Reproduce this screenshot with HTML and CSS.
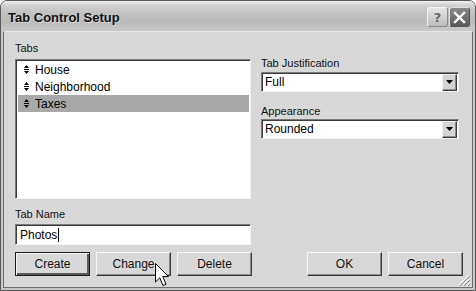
FILE: index.html
```html
<!DOCTYPE html>
<html>
<head>
  <title>Tab Control Setup</title>
  <link rel="stylesheet" href="styles.css">
</head>
<body>
  <div class="window">
    <div class="titlebar">
      <span class="title">Tab Control Setup</span>
      <div class="title-buttons">
        <div class="tb-btn help">?</div>
        <div class="tb-btn close">
          <svg width="13" height="13" viewBox="0 0 13 13"><path d="M2 2 L11 11 M11 2 L2 11" stroke="#fff" stroke-width="2.4" stroke-linecap="square"/></svg>
        </div>
      </div>
    </div>
    <div class="frame">
      <div class="content">
        <div class="main">
          <div class="col-left">
            <label class="field-label">Tabs</label>
            <div class="listbox">
              <div class="list-item">
                <svg class="move-icon" width="5" height="9" viewBox="0 0 5 9"><path d="M2.5 0 L5 3 L0 3 Z M0 4 H5 V5 H0 Z M0 6 H5 L2.5 9 Z" fill="#000"/></svg>
                <span>House</span>
              </div>
              <div class="list-item">
                <svg class="move-icon" width="5" height="9" viewBox="0 0 5 9"><path d="M2.5 0 L5 3 L0 3 Z M0 4 H5 V5 H0 Z M0 6 H5 L2.5 9 Z" fill="#000"/></svg>
                <span>Neighborhood</span>
              </div>
              <div class="list-item selected">
                <svg class="move-icon" width="5" height="9" viewBox="0 0 5 9"><path d="M2.5 0 L5 3 L0 3 Z M0 4 H5 V5 H0 Z M0 6 H5 L2.5 9 Z" fill="#000"/></svg>
                <span>Taxes</span>
              </div>
            </div>
            <label class="field-label name-label">Tab Name</label>
            <div class="textbox">Photos<span class="caret"></span></div>
          </div>
          <div class="col-right">
            <label class="field-label">Tab Justification</label>
            <div class="combo">
              <span class="combo-text">Full</span>
              <div class="combo-arrow"><svg width="7" height="4" viewBox="0 0 7 4"><path d="M0 0 H7 L3.5 4 Z" fill="#000"/></svg></div>
            </div>
            <label class="field-label appearance-label">Appearance</label>
            <div class="combo">
              <span class="combo-text">Rounded</span>
              <div class="combo-arrow"><svg width="7" height="4" viewBox="0 0 7 4"><path d="M0 0 H7 L3.5 4 Z" fill="#000"/></svg></div>
            </div>
          </div>
        </div>
        <div class="button-row">
          <div class="btn-group left-group">
            <button class="btn default">Create</button>
            <button class="btn">Change</button>
            <button class="btn">Delete</button>
          </div>
          <div class="btn-group right-group">
            <button class="btn">OK</button>
            <button class="btn">Cancel</button>
          </div>
        </div>
      </div>
    </div>
    <svg class="grip" width="12" height="12" viewBox="0 0 12 12">
      <path d="M11 1 L1 11 M11 5 L5 11 M11 9 L9 11" stroke="#fff" stroke-width="1"/>
      <path d="M12 2 L2 12 M12 6 L6 12 M12 10 L10 12" stroke="#8a8a8a" stroke-width="1"/>
    </svg>
    <svg class="cursor" width="14" height="24" viewBox="0 0 14 24">
      <path d="M0.5 0.5 L0.5 19 L4.8 14.8 L8 22.5 L11 21.2 L7.8 13.6 L13.5 13.6 Z" fill="#fff" stroke="#000" stroke-width="1" stroke-linejoin="miter"/>
    </svg>
  </div>
</body>
</html>
```

FILE: styles.css
```css
* {
  box-sizing: border-box;
  margin: 0;
  padding: 0;
}
body {
  width: 476px;
  height: 291px;
  background: #fff;
  font-family: "Liberation Sans", Arial, sans-serif;
  font-size: 11px;
  color: #000;
}
.window {
  position: relative;
  width: 476px;
  height: 291px;
  display: flex;
  flex-direction: column;
  border: 1px solid #5a5a5a;
  border-radius: 7px 7px 0 0;
  background: #d6d6d6;
  overflow: hidden;
}
.titlebar {
  height: 30px;
  flex-shrink: 0;
  display: flex;
  align-items: center;
  justify-content: space-between;
  padding: 0 5px 0 7px;
  background: linear-gradient(#f0f0f0 0%, #d0d0d0 15%, #c0c0c0 45%, #bababa 70%, #cacaca 100%);
}
.title {
  font-size: 13px;
  font-weight: bold;
  color: #111;
  padding-top: 2px;
  text-shadow: 1px 1px 0 #d8d8d8;
}
.title-buttons {
  display: flex;
  gap: 1px;
  padding-top: 2px;
}
.tb-btn {
  width: 21px;
  height: 20px;
  border-radius: 3px;
  display: flex;
  align-items: center;
  justify-content: center;
  border: 1px solid #fff;
}
.help {
  background: linear-gradient(#e6e6e6, #bcbcbc);
  color: #6a6a6a;
  font-family: "DejaVu Sans", sans-serif;
  font-weight: bold;
  font-size: 13px;
  border-color: #f4f4f4 #8a8a8a #8a8a8a #f4f4f4;
}
.close {
  background: linear-gradient(#8a8a8a, #5a5a5a);
  border-color: #e0e0e0 #555 #555 #e0e0e0;
}
.frame {
  flex: 1;
  display: flex;
  padding: 0 2px 2px;
  background: #c8c8c8;
}
.content {
  flex: 1;
  display: flex;
  flex-direction: column;
  background: #d8d8d8;
  border: 1px solid #6e6e6e;
  border-top: 1px solid #e6e6e6;
  padding: 10px 9px 0 11px;
}
.main {
  display: flex;
  gap: 10px;
}
.col-left {
  width: 236px;
  display: flex;
  flex-direction: column;
}
.col-right {
  width: 198px;
  display: flex;
  flex-direction: column;
  padding-top: 15px;
}
.field-label {
  display: block;
  line-height: 13px;
  height: 13px;
  color: #111;
}
.col-left > .field-label:first-child {
  margin-bottom: 4px;
}
.listbox {
  height: 140px;
  background: #fff;
  border: 1px solid;
  border-color: #7a7a7a #f4f4f4 #f4f4f4 #7a7a7a;
  box-shadow: inset 1px 1px 0 #3c3c3c;
  padding: 1px 1px 0 2px;
}
.list-item {
  height: 17px;
  display: flex;
  align-items: center;
  padding-left: 6px;
  gap: 6px;
  font-size: 12px;
}
.list-item.selected {
  background: #a8a8a8;
}
.move-icon {
  flex-shrink: 0;
}
.name-label {
  margin-top: 9px;
  margin-bottom: 3px;
}
.textbox {
  height: 21px;
  background: #fff;
  border: 1px solid;
  border-color: #7a7a7a #f4f4f4 #f4f4f4 #7a7a7a;
  box-shadow: inset 1px 1px 0 #3c3c3c;
  display: flex;
  align-items: center;
  padding-left: 4px;
  font-size: 12px;
}
.caret {
  display: inline-block;
  width: 1px;
  height: 14px;
  background: #000;
  margin-left: 1px;
}
.combo {
  height: 20px;
  margin-top: 2px;
  background: #fff;
  border: 1px solid;
  border-color: #7a7a7a #f4f4f4 #f4f4f4 #7a7a7a;
  box-shadow: inset 1px 1px 0 #3c3c3c;
  display: flex;
  align-items: center;
  justify-content: space-between;
  padding: 1px 1px 1px 3px;
  font-size: 12px;
}
.combo-arrow {
  width: 15px;
  height: 17px;
  background: #d4d4d4;
  border: 1px solid;
  border-color: #f0f0f0 #404040 #404040 #f0f0f0;
  box-shadow: inset -1px -1px 0 #8a8a8a;
  display: flex;
  align-items: center;
  justify-content: center;
}
.appearance-label {
  margin-top: 13px;
  margin-bottom: -1px;
}
.button-row {
  display: flex;
  justify-content: space-between;
  margin-top: 7px;
}
.btn-group {
  display: flex;
  gap: 6px;
}
.left-group {
  width: 237px;
}
.btn {
  width: 75px;
  height: 24px;
  font-family: "Liberation Sans", Arial, sans-serif;
  font-size: 12px;
  color: #111;
  background: #d8d8d8;
  border: 1px solid;
  border-color: #f6f6f6 #3a3a3a #3a3a3a #f6f6f6;
  box-shadow: inset -1px -1px 0 #8a8a8a;
}
.btn.default {
  border-color: #1a1a1a;
  box-shadow: inset 1px 1px 0 #f6f6f6, inset -2px -2px 0 #5a5a5a;
}
.grip {
  position: absolute;
  right: 5px;
  bottom: 4px;
}
.cursor {
  position: absolute;
  left: 154px;
  top: 262px;
}
```
